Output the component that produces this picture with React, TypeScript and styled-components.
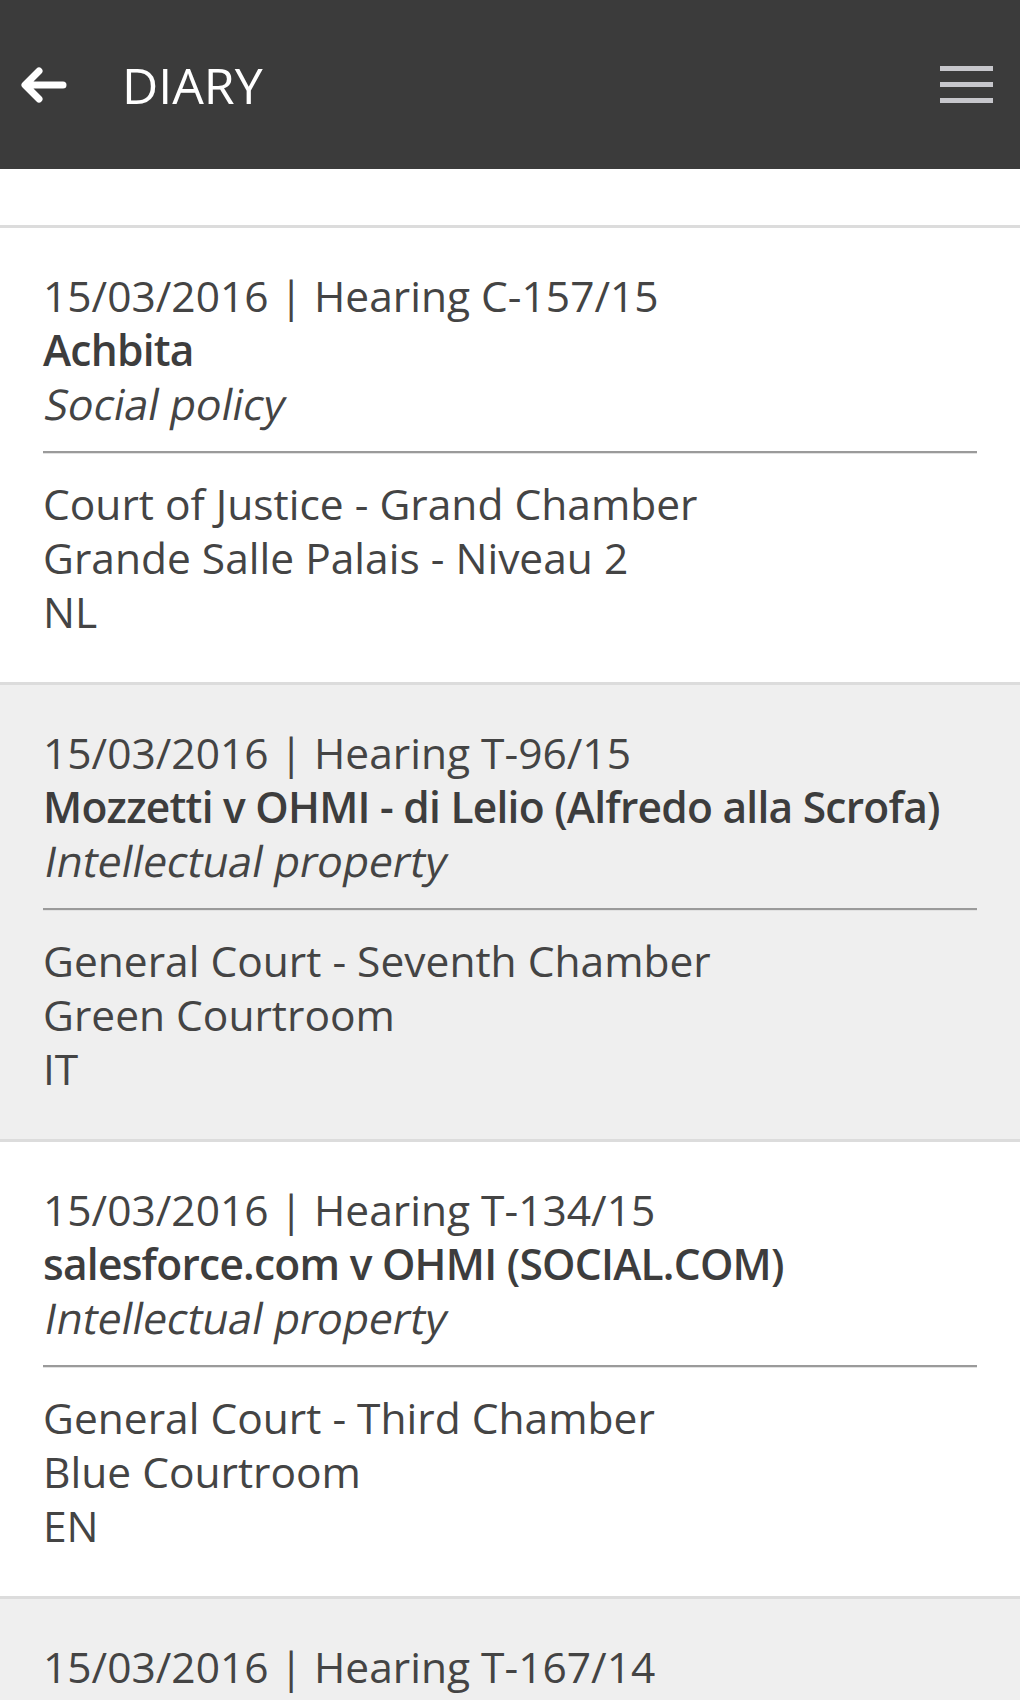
import React from 'react';
import styled, { createGlobalStyle } from 'styled-components';

interface Hearing {
  date: string;
  caseNo: string;
  title?: string;
  subject?: string;
  court?: string;
  room?: string;
  language?: string;
}

const hearings: Hearing[] = [
  {
    date: '15/03/2016',
    caseNo: 'C-157/15',
    title: 'Achbita',
    subject: 'Social policy',
    court: 'Court of Justice - Grand Chamber',
    room: 'Grande Salle Palais - Niveau 2',
    language: 'NL'
  },
  {
    date: '15/03/2016',
    caseNo: 'T-96/15',
    title: 'Mozzetti v OHMI - di Lelio (Alfredo alla Scrofa)',
    subject: 'Intellectual property',
    court: 'General Court - Seventh Chamber',
    room: 'Green Courtroom',
    language: 'IT'
  },
  {
    date: '15/03/2016',
    caseNo: 'T-134/15',
    title: 'salesforce.com v OHMI (SOCIAL.COM)',
    subject: 'Intellectual property',
    court: 'General Court - Third Chamber',
    room: 'Blue Courtroom',
    language: 'EN'
  },
  {
    date: '15/03/2016',
    caseNo: 'T-167/14'
  }
];

const GlobalStyle = createGlobalStyle`
  body {
    margin: 0;
    background: #ffffff;
    font-family: "Open Sans", "Noto Sans", sans-serif;
  }
`;

const Page = styled.div`
  width: 100%;
  display: flex;
  flex-direction: column;
`;

const TopBar = styled.header`
  height: 169px;
  background: #3b3b3b;
  display: flex;
  align-items: center;
  padding: 0 27px 0 20px;
  box-sizing: border-box;
`;

const BackButton = styled.button`
  border: 0;
  background: none;
  padding: 0;
  width: 48px;
  height: 40px;
  display: flex;
  align-items: center;
  justify-content: center;
  cursor: pointer;
`;

const Title = styled.h1`
  margin: 0 0 0 54px;
  flex: 1;
  color: #ffffff;
  font-size: 50px;
  font-weight: 400;
  line-height: 1;
`;

const MenuButton = styled.button`
  border: 0;
  background: none;
  padding: 0;
  width: 53px;
  display: flex;
  flex-direction: column;
  gap: 11px;
  cursor: pointer;
`;

const MenuBar = styled.span`
  display: block;
  height: 5px;
  background: #c6c6cb;
`;

const Spacer = styled.div`
  height: 56px;
  border-bottom: 3px solid #dcdcdc;
`;

const Row = styled.article<{ $shaded: boolean }>`
  background: ${(p) => (p.$shaded ? '#efefef' : '#ffffff')};
  border-bottom: 3px solid #dcdcdc;
  padding: 41px 43px 43px;
  color: #444444;
  font-size: 42.5px;
  line-height: 54px;
`;

const Line = styled.div`
  white-space: nowrap;
`;

const CaseName = styled(Line)`
  font-weight: 600;
  letter-spacing: -0.75px;
  color: #3d3d3d;
`;

const Subject = styled(Line)`
  font-style: normal;
`;

// the source slants the upright face instead of using the italic cut
const Slanted = styled.span`
  display: inline-block;
  transform: skewX(-11deg);
  transform-origin: 0 75%;
`;

const Divider = styled.hr`
  margin: 20px 0 23px;
  height: 0;
  border: 0;
  border-top: 2px solid #9a9a9a;
  border-bottom: 1px solid #e2e2e2;
`;

const BackArrow = () => (
  <svg width="46" height="38" viewBox="0 0 46 38" fill="none">
    <path
      d="M42 19H6M18 5L4 19l14 14"
      stroke="#ffffff"
      strokeWidth="7"
      strokeLinecap="round"
      strokeLinejoin="round"
    />
  </svg>
);

const HearingRow = ({ item, shaded }: { item: Hearing; shaded: boolean }) => (
  <Row $shaded={shaded}>
    <Line>{`${item.date} | Hearing ${item.caseNo}`}</Line>
    {item.title && <CaseName>{item.title}</CaseName>}
    {item.subject && (
      <Subject>
        <Slanted>{item.subject}</Slanted>
      </Subject>
    )}
    {item.court && (
      <>
        <Divider />
        <Line>{item.court}</Line>
        <Line>{item.room}</Line>
        <Line>{item.language}</Line>
      </>
    )}
  </Row>
);

const App = () => (
  <Page>
    <GlobalStyle />
    <TopBar>
      <BackButton aria-label="Back">
        <BackArrow />
      </BackButton>
      <Title>DIARY</Title>
      <MenuButton aria-label="Menu">
        <MenuBar />
        <MenuBar />
        <MenuBar />
      </MenuButton>
    </TopBar>
    <Spacer />
    {hearings.map((h, i) => (
      <HearingRow key={h.caseNo} item={h} shaded={i % 2 === 1} />
    ))}
  </Page>
);

export default App;
